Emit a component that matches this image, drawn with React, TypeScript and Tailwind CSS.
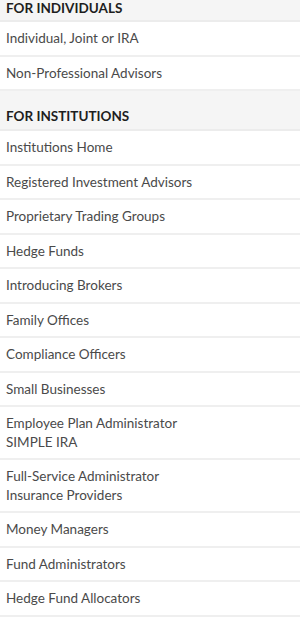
import React from "react";

type Item = string[];

const individuals: Item[] = [["Individual, Joint or IRA"], ["Non-Professional Advisors"]];
const institutions: Item[] = [
  ["Institutions Home"],
  ["Registered Investment Advisors"],
  ["Proprietary Trading Groups"],
  ["Hedge Funds"],
  ["Introducing Brokers"],
  ["Family Offices"],
  ["Compliance Officers"],
  ["Small Businesses"],
  ["Employee Plan Administrator", "SIMPLE IRA"],
  ["Full-Service Administrator", "Insurance Providers"],
  ["Money Managers"],
  ["Fund Administrators"],
  ["Hedge Fund Allocators"],
];

function Row({ lines }: { lines: string[] }) {
  return (
    <div className="px-[6px] py-[7px] border-b-2 border-[#efefef] bg-white text-[13.5px] leading-[18.5px] text-[#4a4a4a]">
      {lines.map((l) => (
        <div key={l}>{l}</div>
      ))}
    </div>
  );
}

export default function App() {
  return (
    <div className="w-[300px] bg-white" style={{ fontFamily: "Lato, 'Noto Sans', sans-serif" }}>
      <div className="bg-[#f5f5f5] px-[6px] pt-0 pb-[4px] border-b-2 border-[#ececec] h-[22px] text-[13.5px] leading-[16px] font-bold text-[#1e1e1e]">
        FOR INDIVIDUALS
      </div>
      {individuals.map((it) => (
        <Row key={it[0]} lines={it} />
      ))}
      <div className="bg-[#f5f5f5] px-[6px] pt-[17px] pb-[4px] border-b-2 border-[#ececec] h-[40px] text-[13.5px] leading-[17px] font-bold text-[#1e1e1e]">
        FOR INSTITUTIONS
      </div>
      {institutions.map((it) => (
        <Row key={it[0]} lines={it} />
      ))}
    </div>
  );
}
